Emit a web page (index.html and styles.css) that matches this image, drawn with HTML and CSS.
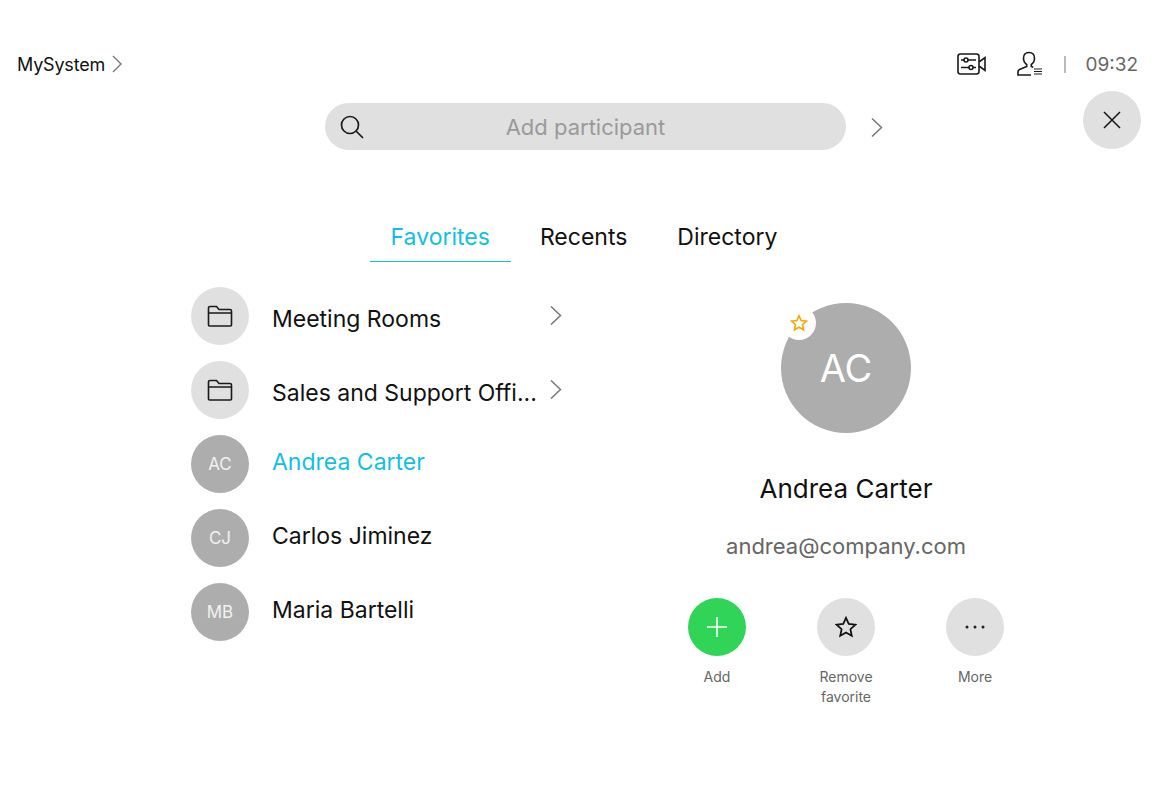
FILE: index.html
```html
<!DOCTYPE html>
<html lang="en">

<head>
    <meta charset="UTF-8">
    <title>Add participant</title>
    <link rel="stylesheet" href="styles.css">
</head>

<body>
    <div class="screen">
        <!-- TOP BAR -->
        <header class="topbar">
            <div class="system">
                MySystem
                <svg class="chev-small" width="12" height="18" viewBox="0 0 12 18"><path d="M2 1l8 8-8 8"/></svg>
            </div>
            <div class="status">
                <svg class="status-icon" width="30" height="22" viewBox="0 0 30 22">
                    <rect x="1" y="1" width="21" height="20" rx="2.5"/>
                    <path d="M22 9l6-4.500v13l-6-4.500"/>
                    <path d="M4 7h3M11 7h8M4 14.500h8M16 14.500h3"/>
                    <circle cx="9" cy="7" r="2"/>
                    <circle cx="14" cy="14.500" r="2"/>
                </svg>
                <svg class="status-icon user-icon" width="26" height="26" viewBox="0 0 26 26">
                    <path d="M12 1.500c-3.500 0-5.500 2.500-5.500 5.800 0 2.800 1.300 5 3.200 6.200v2L2.500 18.500c-1 .5-1.500 1.300-1.500 2.500v3h13"/>
                    <path d="M12 1.500c3.500 0 5.500 2.500 5.500 5.800 0 2.800-1.300 5-3.200 6.200v2l2 .8"/>
                    <path d="M17 18h8M17 20.500h8M17 23h8" class="thin"/>
                </svg>
                <span class="divider"></span>
                <span class="clock">09:32</span>
            </div>
        </header>

        <!-- SEARCH -->
        <div class="search-row">
            <div class="search">
                <svg class="search-icon" width="24" height="24" viewBox="0 0 24 24">
                    <circle cx="10" cy="10" r="8.500"/>
                    <path d="M16 16l7 7"/>
                </svg>
                <span class="search-text">Add participant</span>
            </div>
            <svg class="chev" width="14" height="20" viewBox="0 0 14 20"><path d="M2 1.500l9.500 9-9.500 9"/></svg>
        </div>
        <button class="close" aria-label="Close">
            <svg width="20" height="20" viewBox="0 0 20 20"><path d="M2 2l16 16M18 2L2 18"/></svg>
        </button>

        <!-- TABS -->
        <nav class="tabs">
            <div class="tab active">Favorites</div>
            <div class="tab">Recents</div>
            <div class="tab">Directory</div>
        </nav>

        <main class="content">
            <!-- LIST -->
            <div class="list">
                <div class="row">
                    <div class="circle light">
                        <svg class="folder" width="26" height="22" viewBox="0 0 26 22"><path d="M1.500 8V3a1.500 1.500 0 0 1 1.500-1.500h6.500L12 4.500h11A1.500 1.500 0 0 1 24.500 6v14a1 1 0 0 1-1 1H2.500a1 1 0 0 1-1-1V8h23"/></svg>
                    </div>
                    <span class="row-name low">Meeting Rooms</span>
                    <svg class="chev row-chev" width="14" height="20" viewBox="0 0 14 20"><path d="M2 1.500l9.500 9-9.500 9"/></svg>
                </div>
                <div class="row">
                    <div class="circle light">
                        <svg class="folder" width="26" height="22" viewBox="0 0 26 22"><path d="M1.500 8V3a1.500 1.500 0 0 1 1.500-1.500h6.500L12 4.500h11A1.500 1.500 0 0 1 24.500 6v14a1 1 0 0 1-1 1H2.500a1 1 0 0 1-1-1V8h23"/></svg>
                    </div>
                    <span class="row-name low">Sales and Support Offi...</span>
                    <svg class="chev row-chev" width="14" height="20" viewBox="0 0 14 20"><path d="M2 1.500l9.500 9-9.500 9"/></svg>
                </div>
                <div class="row">
                    <div class="circle dark">AC</div>
                    <span class="row-name selected">Andrea Carter</span>
                </div>
                <div class="row">
                    <div class="circle dark">CJ</div>
                    <span class="row-name">Carlos Jiminez</span>
                </div>
                <div class="row">
                    <div class="circle dark">MB</div>
                    <span class="row-name">Maria Bartelli</span>
                </div>
            </div>

            <!-- DETAILS -->
            <div class="details">
                <div class="avatar">
                    AC
                    <div class="badge">
                        <svg class="badge-star" width="18" height="18" viewBox="0 0 24 24"><path d="M12 2.500l2.900 6.300 6.900.8-5.100 4.700 1.400 6.800-6.100-3.400-6.100 3.400 1.400-6.800-5.100-4.700 6.900-.8z"/></svg>
                    </div>
                </div>
                <div class="detail-name">Andrea Carter</div>
                <div class="detail-mail">andrea@company.com</div>
                <div class="actions">
                    <div class="action">
                        <div class="circle green">
                            <svg class="plus" width="22" height="22" viewBox="0 0 22 22"><path d="M11 1v20M1 11h20"/></svg>
                        </div>
                        <span class="action-label">Add</span>
                    </div>
                    <div class="action">
                        <div class="circle light">
                            <svg class="star" width="22" height="22" viewBox="0 0 24 24"><path d="M12 2l3 6.700 7.200.8-5.400 4.900 1.500 7.200-6.300-3.700-6.300 3.700 1.500-7.200-5.400-4.900 7.200-.8z"/></svg>
                        </div>
                        <span class="action-label">Remove<br>favorite</span>
                    </div>
                    <div class="action">
                        <div class="circle light">
                            <svg class="dots" width="20" height="4" viewBox="0 0 20 4"><circle cx="2" cy="2" r="1.500"/><circle cx="10" cy="2" r="1.500"/><circle cx="18" cy="2" r="1.500"/></svg>
                        </div>
                        <span class="action-label">More</span>
                    </div>
                </div>
            </div>
        </main>
    </div>
</body>

</html>
```

FILE: styles.css
```css
* {
    margin: 0;
    padding: 0;
    box-sizing: border-box;
    font-family: 'Inter', 'Liberation Sans', sans-serif;
}

body {
    background-color: #fff;
    overflow: hidden;
}

svg {
    display: block;
    fill: none;
    stroke: #1a1a1a;
    stroke-width: 1.6;
}

.screen {
    width: 1168px;
    height: 800px;
    position: relative;
    padding-top: 50px;
}

/* top bar */
.topbar {
    height: 28px;
    display: flex;
    justify-content: space-between;
    align-items: center;
    padding: 0 30px 0 17px;
}

.system {
    display: flex;
    align-items: center;
    gap: 6px;
    font-size: 18px;
    letter-spacing: -0.2px;
    color: #111;
}

.chev-small {
    stroke: #777;
    stroke-width: 1.4;
}

.status {
    display: flex;
    align-items: center;
}

.user-icon {
    margin-left: 30px;
}

.user-icon .thin {
    stroke-width: 1.2;
}

.divider {
    width: 2px;
    height: 17px;
    margin: 0 19px 0 21px;
    background-color: #bbb;
}

.clock {
    font-size: 19px;
    color: #666;
}

/* search */
.search-row {
    display: flex;
    justify-content: center;
    align-items: center;
    gap: 24px;
    margin-top: 25px;
    padding-left: 41px;
}

.search {
    width: 521px;
    height: 47px;
    border-radius: 24px;
    background-color: #e0e0e0;
    display: flex;
    align-items: center;
    position: relative;
    padding-left: 15px;
}

.search-icon {
    stroke-width: 1.7;
}

.search-text {
    flex: 1;
    text-align: center;
    padding-right: 39px;
    font-size: 22px;
    color: #9a9a9a;
}

.chev {
    stroke: #777;
    stroke-width: 1.5;
}

.close {
    position: absolute;
    top: 91px;
    left: 1083px;
    width: 58px;
    height: 58px;
    border: none;
    border-radius: 50%;
    background-color: #e0e0e0;
    display: flex;
    justify-content: center;
    align-items: center;
}

/* tabs */
.tabs {
    display: flex;
    justify-content: center;
    gap: 8px;
    margin-top: 62px;
}

.tab {
    padding: 0 21px;
    height: 50px;
    line-height: 50px;
    font-size: 23px;
    color: #111;
}

.tab.active {
    color: #12bfe3;
    border-bottom: 1px solid #12bfe3;
}

/* list and details */
.content {
    display: flex;
    margin-top: 25px;
    padding-left: 191px;
}

.list {
    width: 400px;
    display: flex;
    flex-direction: column;
    gap: 16px;
}

.row {
    height: 58px;
    display: flex;
    align-items: center;
    position: relative;
}

.circle {
    width: 58px;
    height: 58px;
    flex-shrink: 0;
    border-radius: 50%;
    display: flex;
    justify-content: center;
    align-items: center;
}

.light {
    background-color: #e0e0e0;
}

.dark {
    background-color: #adadad;
    color: #f2f2f2;
    font-size: 17px;
}

.green {
    background-color: #30d557;
}

.row-name {
    margin-left: 23px;
    font-size: 23px;
    color: #111;
    position: relative;
    top: -2px;
}

.row-name.low {
    top: 3px;
}

.row-name.selected {
    color: #12bfe3;
}

.row-chev {
    position: absolute;
    left: 358px;
    top: 18px;
}

.details {
    width: 400px;
    margin-left: 55px;
    margin-top: 16px;
    display: flex;
    flex-direction: column;
    align-items: center;
}

.avatar {
    width: 130px;
    height: 130px;
    border-radius: 50%;
    background-color: #adadad;
    color: #fff;
    font-size: 38px;
    display: flex;
    justify-content: center;
    align-items: center;
    position: relative;
}

.badge {
    position: absolute;
    left: 1px;
    top: 3px;
    width: 34px;
    height: 34px;
    border-radius: 50%;
    background-color: #fff;
    display: flex;
    justify-content: center;
    align-items: center;
}

.badge-star {
    stroke: #f5a800;
    stroke-width: 2.2;
}

.detail-name {
    margin-top: 40px;
    font-size: 26px;
    color: #111;
}

.detail-mail {
    margin-top: 29px;
    font-size: 22px;
    color: #666;
}

.actions {
    display: flex;
    margin-top: 39px;
}

.action {
    width: 129px;
    display: flex;
    flex-direction: column;
    align-items: center;
}

.action-label {
    margin-top: 11px;
    font-size: 14px;
    line-height: 20px;
    text-align: center;
    color: #666;
}

.plus {
    stroke: #fff;
    stroke-width: 1.6;
}

.star {
    stroke: #111;
    stroke-width: 1.9;
}

.dots {
    fill: #222;
    stroke: none;
}
```
